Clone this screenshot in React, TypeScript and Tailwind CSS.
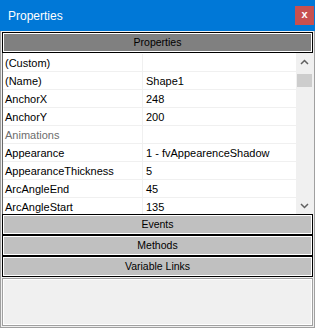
import React from "react";

const rows: { name: string; value: string; cat?: boolean }[] = [
  { name: "(Custom)", value: "" },
  { name: "(Name)", value: "Shape1" },
  { name: "AnchorX", value: "248" },
  { name: "AnchorY", value: "200" },
  { name: "Animations", value: "", cat: true },
  { name: "Appearance", value: "1 - fvAppearenceShadow" },
  { name: "AppearanceThickness", value: "5" },
  { name: "ArcAngleEnd", value: "45" },
  { name: "ArcAngleStart", value: "135" },
];

function Bar({ label, dark }: { label: string; dark?: boolean }) {
  return (
    <div
      className={`h-[21px] shrink-0 border border-black shadow-[inset_1px_1px_0_#fff,inset_-1px_-1px_0_#fff] flex items-center justify-center text-[10.5px] text-black ${
        dark ? "bg-[#808080]" : "bg-[#c0c0c0]"
      }`}
    >
      {label}
    </div>
  );
}

export default function App() {
  return (
    <div
      className="w-[315px] h-[328px] flex flex-col bg-[#f0f0f0] overflow-hidden"
      style={{ fontFamily: '"Liberation Sans", Arial, sans-serif' }}
    >
      <div className="h-[31px] bg-[#0078d7] flex items-center justify-between pl-[8px] pr-[1px] shrink-0">
        <span className="text-white text-[12px]">Properties</span>
        <div className="w-[19px] h-[19px] bg-[#c75050] flex items-center justify-center text-white text-[11px] font-bold leading-none pb-[2px]">
          x
        </div>
      </div>
      <div className="flex-1 flex flex-col border-x border-b border-[#a0a0a0] px-[1px] pt-[1px] pb-[1px] gap-0">
        <Bar label="Properties" dark />
        <div className="h-[161px] shrink-0 flex bg-white border-l border-[#696969] overflow-hidden">
          <div className="flex-1 flex flex-col pt-[1px]">
            {rows.map((r) => (
              <div key={r.name} className="h-[18px] flex border-b border-[#f0f0f0] shrink-0">
                <div
                  className={`w-[140px] pl-[2px] pt-[1px] flex items-center text-[11px] border-r border-[#f0f0f0] ${
                    r.cat ? "text-[#6d6d6d]" : "text-black"
                  }`}
                >
                  {r.name}
                </div>
                <div className="flex-1 pl-[3px] pt-[1px] flex items-center text-[11px] text-black">{r.value}</div>
              </div>
            ))}
          </div>
          <div className="w-[17px] bg-[#f0f0f0] flex flex-col items-center">
            <div className="h-[17px] flex items-center justify-center">
              <svg width="9" height="6" viewBox="0 0 9 6">
                <path d="M1 5 L4.5 1.5 L8 5" stroke="#606060" strokeWidth="1.5" fill="none" />
              </svg>
            </div>
            <div className="w-[15px] h-[13px] bg-[#cdcdcd] mt-[4px]" />
            <div className="flex-1" />
            <div className="h-[17px] flex items-center justify-center">
              <svg width="9" height="6" viewBox="0 0 9 6">
                <path d="M1 1 L4.5 4.5 L8 1" stroke="#606060" strokeWidth="1.5" fill="none" />
              </svg>
            </div>
          </div>
        </div>
        <Bar label="Events" />
        <Bar label="Methods" />
        <Bar label="Variable Links" />
        <div className="flex-1 mt-[1px] border border-[#a0a0a0] shadow-[inset_1px_1px_0_#fff,inset_-1px_-1px_0_#fff] bg-[#f0f0f0]" />
      </div>
    </div>
  );
}
